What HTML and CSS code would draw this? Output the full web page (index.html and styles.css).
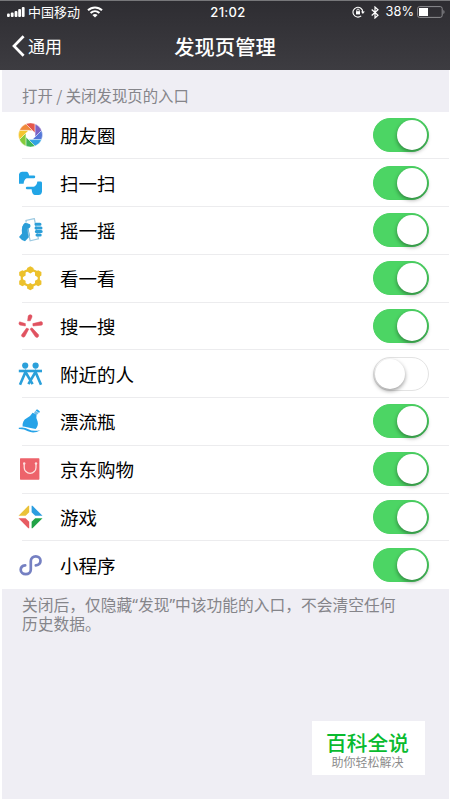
FILE: index.html
```html
<!DOCTYPE html>
<html lang="zh-CN">
<head>
    <meta charset="UTF-8">
    <meta name="viewport" content="width=device-width, initial-scale=1.0">
    <title>发现页管理</title>
    <link rel="stylesheet" href="styles.css">
</head>
<body>
    <header class="header">
        <!-- Status bar -->
        <div class="status">
            <div class="status-left">
                <svg class="signal" width="18" height="12" viewBox="0 0 18 12" fill="#fff">
                    <rect x="0" y="7.5" width="2.8" height="3.5" rx="1"/>
                    <rect x="3.8" y="6.5" width="2.8" height="4.5" rx="1"/>
                    <rect x="7.6" y="5" width="2.8" height="6" rx="1"/>
                    <rect x="11.2" y="3" width="2.8" height="8" rx="1"/>
                    <rect x="14.8" y="1" width="2.8" height="10" rx="1"/>
                </svg>
                <span class="carrier">中国移动</span>
                <svg class="wifi" width="16" height="12" viewBox="0 0 16 12" fill="none" stroke="#fff" stroke-width="2">
                    <path d="M1 4.3C5 .4 11 .4 15 4.3"/>
                    <path d="M3.6 7.1C6.2 4.7 9.8 4.7 12.4 7.1"/>
                    <path d="M8 11.6L5.4 9C7 7.6 9 7.6 10.6 9Z" fill="#fff" stroke="none"/>
                </svg>
            </div>
            <span class="time">21:02</span>
            <div class="status-right">
                <svg class="lock" width="13" height="12" viewBox="0 0 13 12" fill="none" stroke="#fff" stroke-width="1.1">
                    <path d="M9.2 9.8A4.9 4.9 0 1 1 10.8 6"/>
                    <path d="M9 5.5H12.8L10.9 8Z" fill="#fff" stroke="none"/>
                    <rect x="4" y="5.2" width="4" height="3.2" fill="#fff" stroke="none"/>
                    <path d="M4.8 5.5V4.3a1.2 1.2 0 0 1 2.4 0V5.5" stroke-width=".9"/>
                </svg>
                <svg class="bluetooth" width="8" height="13" viewBox="0 0 8 13" fill="none" stroke="#fff" stroke-width="1.2">
                    <path d="M.7 3.5L7 9.3 4 12V1L7 3.7.7 9.5"/>
                </svg>
                <span class="percent">38%</span>
                <svg width="28" height="12" viewBox="0 0 28 12">
                    <rect x=".6" y=".6" width="24.6" height="10.8" rx="2" fill="none" stroke="#8d8d91" stroke-width="1"/>
                    <rect x="2" y="2" width="9" height="8" fill="#fff"/>
                    <path d="M26.4 4v4c1.5-.6 1.5-3.4 0-4Z" fill="#8d8d91"/>
                </svg>
            </div>
        </div>
        <!-- Navigation -->
        <div class="nav">
            <a class="back">
                <svg width="13" height="22" viewBox="0 0 13 22" fill="none" stroke="#fff" stroke-width="2.7">
                    <path d="M11.6 1.2L2 11l9.6 9.8"/>
                </svg>
                <span>通用</span>
            </a>
            <h1 class="title">发现页管理</h1>
        </div>
    </header>

    <main class="page">
        <h2 class="caption">打开 / 关闭发现页的入口</h2>

        <ul class="list">
            <li class="row">
                <svg class="icon" viewBox="0 0 25 25">
                    <defs><path id="blade" d="M1.9-4.6H-11.08A12 12 0 0 1-4.58-11.09Z"/></defs>
                    <g transform="translate(12.5 12)" stroke="#fff" stroke-width=".4">
                        <use href="#blade" fill="#f08a3c"/>
                        <use href="#blade" fill="#e4574c" transform="rotate(45)"/>
                        <use href="#blade" fill="#7d62c4" transform="rotate(90)"/>
                        <use href="#blade" fill="#5578d8" transform="rotate(135)"/>
                        <use href="#blade" fill="#31a3e2" transform="rotate(180)"/>
                        <use href="#blade" fill="#3fb558" transform="rotate(225)"/>
                        <use href="#blade" fill="#85cb3b" transform="rotate(270)"/>
                        <use href="#blade" fill="#f3c62f" transform="rotate(315)"/>
                    </g>
                </svg>
                <span class="label">朋友圈</span>
                <span class="switch on"></span>
            </li>
            <li class="row">
                <svg class="icon" viewBox="0 0 25 25" fill="#22a5e6">
                    <path d="M1 3.2Q1.4.7 4 .7H8.5Q10.4 .9 11.2 4.6H16.2Q17.4 4.8 17.2 6T16 7.2H8.6Q6 8.2 5.6 12.8H1Z"/>
                    <path d="M8.8 15.8H15.5Q18.6 15 19.4 10.5H23Q24 10.5 24 12V20.5Q23.6 24 20.5 24H16.6Q14.2 23.6 13.6 18.2H8.8Q7.8 18 7.8 17T8.8 15.8Z"/>
                </svg>
                <span class="label">扫一扫</span>
                <span class="switch on"></span>
            </li>
            <li class="row">
                <svg class="icon" viewBox="0 0 25 25">
                    <path d="M1 19L4 15.5Q3 8 7 4.8L12 6.2Q13.5 9 10.5 10.5L12 18 7 23.2Q3.5 22.5 1 19Z" fill="#2b9ed8"/>
                    <path d="M8.2 4.5L8 2.4 16.3.6 20.4 20.8 12.2 22.8 9 9" fill="none" stroke="#9fcbe2" stroke-width="1.3"/>
                    <path d="M18 6.3H22M18 10H23M18.3 13.6H23.2M19 17H22.2" stroke="#2b9ed8" stroke-width="3" stroke-linecap="round"/>
                    <path d="M4.5 14V8.5Q6 5.5 9 5.5 12 6 11.5 8 9 10 9.5 15Z" fill="#2b9ed8"/>
                </svg>
                <span class="label">摇一摇</span>
                <span class="switch on"></span>
            </li>
            <li class="row">
                <svg class="icon" viewBox="0 0 25 25" fill="#ecc12c">
                    <defs><path id="dot" d="M0-3.6L3.2-1.8V1.8L0 3.6-3.2 1.8V-1.8Z"/></defs>
                    <path d="M12.3 3L20.8 7V16.6L12.3 20.8 3.8 16.6V7Z" fill="none" stroke="#ecc12c" stroke-width="2.2"/>
                    <use href="#dot" x="12.3" y="3.8"/>
                    <use href="#dot" x="20.2" y="7.8"/>
                    <use href="#dot" x="20.2" y="16.6"/>
                    <use href="#dot" x="12.3" y="20.7"/>
                    <use href="#dot" x="4.4" y="16.6"/>
                    <use href="#dot" x="4.4" y="7.8"/>
                </svg>
                <span class="label">看一看</span>
                <span class="switch on"></span>
            </li>
            <li class="row">
                <svg class="icon" viewBox="0 0 25 25" fill="#e05260" stroke="#e05260" stroke-width=".5">
                    <path d="M10.2 2Q11 .4 12.8.8T14 3L12.3 6.8H9.6Z"/>
                    <path d="M1.6 7.8L7.4 9.6V12L1.6 11Q.2 9.4 1.6 7.8Z"/>
                    <path d="M14.8 9.6L23.2 7.6Q24.7 7.9 24.6 9.6T23.4 11.2L15 12Z"/>
                    <path d="M8.6 14L10.8 15 6.8 22.6Q5.6 23.6 4.2 22.8T3.8 20.6Z"/>
                    <path d="M12 15L14 13.8 20.6 20.8Q21 22.6 19.8 23.2T17.4 22.8Z"/>
                </svg>
                <span class="label">搜一搜</span>
                <span class="switch on"></span>
            </li>
            <li class="row">
                <svg class="icon" viewBox="0 0 25 25" fill="none" stroke="#2ba0da" stroke-width="2.6">
                    <circle cx="7.2" cy="3.6" r="3.1" fill="#2ba0da" stroke="none"/>
                    <circle cx="17.6" cy="3.6" r="3.1" fill="#2ba0da" stroke="none"/>
                    <path d="M.8 9H24"/>
                    <path d="M2 22.8L7.5 10 14.6 22.2M23 22.8L17.5 10 10.4 22.2"/>
                </svg>
                <span class="label">附近的人</span>
                <span class="switch"></span>
            </li>
            <li class="row">
                <svg class="icon" viewBox="0 0 25 25" fill="#26a3e8">
                    <path d="M4.6 17.5Q4.2 11.4 8.6 9.2 12.6 7.4 14.6 3.8L18.6 5.4Q17.6 9 19.6 12.5 20.8 16.4 17.6 20Q12 19 9 18.2Q6.5 17.4 4.6 17.5Z"/>
                    <path d="M17.6 1.6L19 .3 21.8 2.2 21.2 4Z"/>
                    <path d="M15.8 4.2L17.4 1.8 20.6 4 18.8 6Z" fill="#71bde8"/>
                    <path d="M.8 18.8Q6 17.6 10.4 20.2T22.4 21.2Q16 25 10 22.3 5.6 19.7.8 20Z"/>
                </svg>
                <span class="label">漂流瓶</span>
                <span class="switch on"></span>
            </li>
            <li class="row">
                <svg class="icon" viewBox="0 0 25 25">
                    <rect x="2" y="1.3" width="19.4" height="21.4" rx=".6" fill="#ed636b"/>
                    <path d="M6.2 6.5V10.4A5.9 5.9 0 0 0 18 10.4V6.5" fill="none" stroke="#fde0de" stroke-width="1.3"/>
                    <circle cx="6.2" cy="6.5" r="1.2" fill="#fde0de"/>
                    <circle cx="18" cy="6.5" r="1.2" fill="#fde0de"/>
                </svg>
                <span class="label">京东购物</span>
                <span class="switch on"></span>
            </li>
            <li class="row">
                <svg class="icon" viewBox="0 0 25 25">
                    <path d="M.5 10.8L10.3.8H11.2V7.2L7.6 10.8Z" fill="#eac23a"/>
                    <path d="M13.6.8H14.5L24.5 10.8H17.2L13.6 7.2Z" fill="#2c9de0"/>
                    <path d="M24.5 13.2L14.5 23.2H13.6V16.8L17.2 13.2Z" fill="#21a347"/>
                    <path d="M.5 13.2H7.6L11.2 16.8V23.2H10.3Z" fill="#e75b61"/>
                </svg>
                <span class="label">游戏</span>
                <span class="switch on"></span>
            </li>
            <li class="row">
                <svg class="icon" viewBox="0 0 25 25" fill="none" stroke="#7580c2" stroke-width="2.7" stroke-linecap="round">
                    <path d="M17.8 12.4C21 12 22.5 9.8 22.5 7.8 22.5 5.2 20.3 3.4 17.8 3.4 14.8 3.4 12.8 5.4 12.8 8V16.6C12.8 19.4 10.6 21.2 7.8 21.2 5 21.2 2.7 19.4 2.7 16.8 2.7 14.4 4.4 12.6 7.2 12.3"/>
                </svg>
                <span class="label">小程序</span>
                <span class="switch on"></span>
            </li>
        </ul>

        <p class="note">关闭后，仅隐藏“发现”中该功能的入口，不会清空任何<br>历史数据。</p>

        <div class="badge">
            <strong>百科全说</strong>
            <span>助你轻松解决</span>
        </div>
    </main>
</body>
</html>
```

FILE: styles.css
```css
* {
    box-sizing: border-box;
}

body {
    margin: 0;
    height: 800px;
    display: flex;
    flex-direction: column;
    overflow: hidden;
    background-color: #fff;
    color: #000;
    font-family: "Noto Sans CJK SC", sans-serif;
}

/* Header */
.header {
    height: 70px;
    flex: none;
    border-top: 1px solid #77777a;
    background: linear-gradient(#2e2d32, #3d3c41);
    color: #fff;
}

.status {
    height: 22px;
    padding: 0 5px 0 7px;
    display: grid;
    grid-template-columns: 1fr auto 1fr;
    align-items: center;
    font-size: 13px;
    line-height: 20px;
}

.status-left,
.status-right {
    display: flex;
    align-items: center;
}

.status-right {
    justify-content: flex-end;
}

.carrier {
    margin: -1px 0 0 3px;
}

.wifi {
    margin-left: 7px;
}

.time {
    padding-left: 4px;
    font-family: Inter, sans-serif;
    font-size: 13px;
    font-weight: 500;
    letter-spacing: 0.3px;
}

.bluetooth {
    margin-left: 6px;
}

.percent {
    margin: 0 3px 0 7px;
    font-family: Inter, sans-serif;
    font-size: 12.8px;
}

.nav {
    height: 45px;
    padding: 0 12px;
    display: grid;
    grid-template-columns: 1fr auto 1fr;
    align-items: center;
}

.back {
    display: flex;
    align-items: center;
    gap: 3px;
    font-size: 17px;
    line-height: 24px;
}

.title {
    margin: 0;
    font-size: 20.3px;
    font-weight: 500;
    line-height: 30px;
}

/* Page */
.page {
    flex: 1;
    display: flex;
    flex-direction: column;
    margin: 0 1px 1px 2px;
    background-color: #efeef4;
}

.caption {
    margin: 0;
    height: 41.5px;
    padding: 9px 0 0 20px;
    color: #85858a;
    font-size: 15.4px;
    font-weight: 400;
    line-height: 33px;
}

.list {
    margin: 0;
    padding: 0;
    list-style: none;
    background-color: #fff;
}

.row {
    height: 47.75px;
    padding: 0 20px 0 16px;
    display: flex;
    align-items: center;
    background: linear-gradient(#ececee, #ececee) 20px 100% / 100% 1px no-repeat;
}

.row:last-child {
    background: none;
}

.icon {
    width: 25px;
    height: 25px;
    flex: none;
}

.label {
    flex: 1;
    margin: -1px 0 0 17px;
    font-size: 18.5px;
    line-height: 28px;
}

/* Switch */
.switch {
    width: 56px;
    height: 34px;
    margin-top: -1px;
    padding: 1px;
    display: flex;
    border: 1px solid #e3e3e3;
    border-radius: 17px;
    background-color: #fff;
}

.switch::before {
    content: "";
    width: 30px;
    height: 30px;
    border-radius: 50%;
    background-color: #fff;
    box-shadow: 0 2px 4px rgba(0, 0, 0, 0.4);
}

.switch.on {
    justify-content: flex-end;
    border-color: #4cd263;
    background-color: #4cd564;
}

.note {
    margin: 7px 0 0;
    padding-left: 20px;
    color: #85858a;
    font-family: "Noto Sans", "Noto Sans CJK SC", sans-serif;
    font-size: 15.75px;
    line-height: 19px;
}

.note,
.label,
.caption {
    white-space: nowrap;
}

/* Badge */
.badge {
    width: 113px;
    height: 54px;
    margin: auto 24px 24px auto;
    padding-right: 2px;
    display: flex;
    flex-direction: column;
    align-items: center;
    background-color: #fff;
}

.badge strong {
    color: #09bb2f;
    font-size: 20.7px;
    font-weight: 500;
    line-height: 24px;
    margin-top: 9px;
}

.badge span {
    color: #8c8c8c;
    font-size: 12px;
    line-height: 16px;
}
```
